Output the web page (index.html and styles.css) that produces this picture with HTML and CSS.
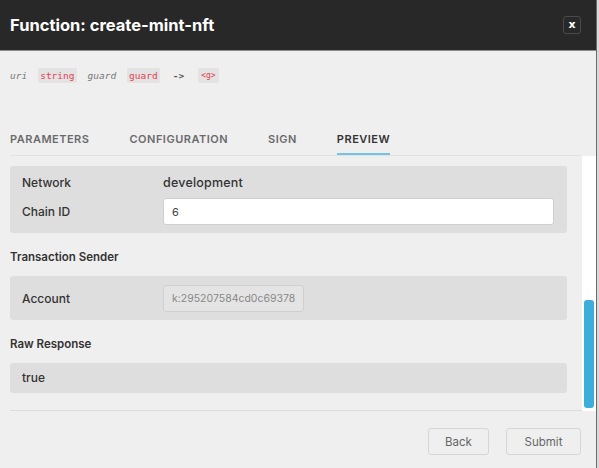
FILE: index.html
```html
<!DOCTYPE html>
<html>
<head>
<meta charset="utf-8">
<link rel="stylesheet" href="styles.css">
</head>
<body>
<div class="modal">
  <header class="head">
    <h1 class="title">Function: create-mint-nft</h1>
    <button class="close">x</button>
  </header>
  <div class="sig">
    <span class="arg">uri</span>
    <span class="chip">string</span>
    <span class="arg">guard</span>
    <span class="chip">guard</span>
    <span class="arrow">-&gt;</span>
    <span class="chip small">&lt;g&gt;</span>
  </div>
  <nav class="tabs">
    <span class="tab">PARAMETERS</span>
    <span class="tab">CONFIGURATION</span>
    <span class="tab">SIGN</span>
    <span class="tab active">PREVIEW</span>
  </nav>
  <div class="scroller">
    <div class="content">
      <div class="box net">
        <div class="row"><span class="lbl">Network</span><span class="val">development</span></div>
        <div class="row"><span class="lbl">Chain ID</span><div class="input wide">6</div></div>
      </div>
      <h2 class="sect">Transaction Sender</h2>
      <div class="box acct">
        <div class="row"><span class="lbl">Account</span><div class="input ro">k:295207584cd0c69378</div></div>
      </div>
      <h2 class="sect">Raw Response</h2>
      <div class="box resp">true</div>
    </div>
    <div class="track"><div class="thumb"></div></div>
  </div>
  <footer class="foot">
    <button class="btn back">Back</button>
    <button class="btn submit">Submit</button>
  </footer>
</div>
</body>
</html>
```
FILE: styles.css
```css
* { box-sizing: border-box; }
html, body { margin: 0; padding: 0; }
body {
  width: 599px;
  height: 468px;
  background: #d9d9d9;
  font-family: Inter, "Open Sans", sans-serif;
  color: #333;
  overflow: hidden;
}
.modal {
  width: 597px;
  height: 468px;
  background: #efefef;
  border-right: 1px solid #6a6a6a;
  display: flex;
  flex-direction: column;
}
.modal > * { flex-shrink: 0; }
.head {
  height: 51px;
  background: #282828;
  border-bottom: 1px solid #8c8c8c;
  display: flex;
  align-items: center;
  justify-content: space-between;
  padding: 0 15px 0 10px;
}
.title {
  margin: 0;
  font-size: 16.5px;
  font-weight: 700;
  color: #fff;
}
.close {
  width: 18px;
  height: 18px;
  padding: 0;
  background: #282828;
  border: 1px solid #4a4a4a;
  border-radius: 3px;
  color: #fff;
  font-family: "DejaVu Sans", sans-serif;
  font-weight: 700;
  font-size: 11px;
  line-height: 14px;
}
.sig {
  display: flex;
  align-items: flex-start;
  gap: 11px;
  padding: 17px 10px 0 10px;
  height: 32px;
  font-family: "DejaVu Sans Mono", monospace;
  font-size: 9.5px;
}
.sig span { line-height: 15px; }
.arg { color: #777; font-style: italic; }
.chip {
  background: #e3e3e3;
  color: #e8404f;
  padding: 0 2px;
  border-radius: 2px;
}
.arrow { color: #555; font-weight: 700; margin: 0 3px 0 2px; }
.chip.small { font-size: 8px; padding: 0 3px; }
.tabs {
  margin: 49px 15px 0 10px;
  display: flex;
  gap: 40px;
  border-bottom: 1px solid #e3e3e3;
  height: 24px;
}
.tab {
  font-size: 11px;
  font-weight: 600;
  letter-spacing: 0.5px;
  color: #6b6b6b;
  line-height: 15px;
}
.tab.active {
  color: #333;
  border-bottom: 2px solid #73c3e4;
  height: 23px;
}
.scroller {
  height: 255px;
  display: flex;
  margin-left: 10px;
}
.content {
  flex: 1;
  padding: 10px 15px 0 0;
  border-bottom: 1px solid #dcdcdc;
}
.box {
  background: #dedede;
  border-radius: 3px;
  font-size: 12px;
  padding: 0 13px 0 12px;
}
.row { display: flex; align-items: center; }
.lbl { width: 141px; font-weight: 500; }
.val { font-weight: 500; font-size: 12.5px; letter-spacing: 0.2px; }
.net { padding-top: 8px; padding-bottom: 8px; }
.net .row:first-child { height: 16px; margin-bottom: 8px; }
.input {
  height: 27px;
  border: 1px solid #cfcfcf;
  border-radius: 3px;
  background: #fff;
  font-size: 11px;
  padding: 0 8px;
  display: flex;
  align-items: center;
  overflow: hidden;
  white-space: nowrap;
}
.input.wide { flex: 1; color: #444; }
.input.ro {
  width: 141px;
  background: #e4e4e4;
  border-color: #d0d0d0;
  color: #888;
  font-size: 10.5px;
}
.acct { padding-top: 9px; padding-bottom: 8px; }
.sect {
  margin: 16px 0 11px 0;
  font-size: 11.5px;
  font-weight: 600;
  line-height: 16px;
}
.resp { padding-top: 7px; padding-bottom: 7px; line-height: 16px; font-weight: 500; }
.track {
  width: 14px;
  background: #fff;
  padding: 144px 2px 2px 2px;
}
.thumb {
  height: 108px;
  background: #3daedb;
  border-radius: 3px;
}
.foot {
  display: flex;
  justify-content: flex-end;
  gap: 17px;
  padding: 17px 15px 0 0;
}
.btn {
  height: 27px;
  background: #efefef;
  border: 1px solid #d6d6d6;
  border-radius: 3px;
  color: #666;
  font-family: Inter, "Open Sans", sans-serif;
  font-size: 11.5px;
}
.back { width: 61px; }
.submit { width: 75px; }
```
